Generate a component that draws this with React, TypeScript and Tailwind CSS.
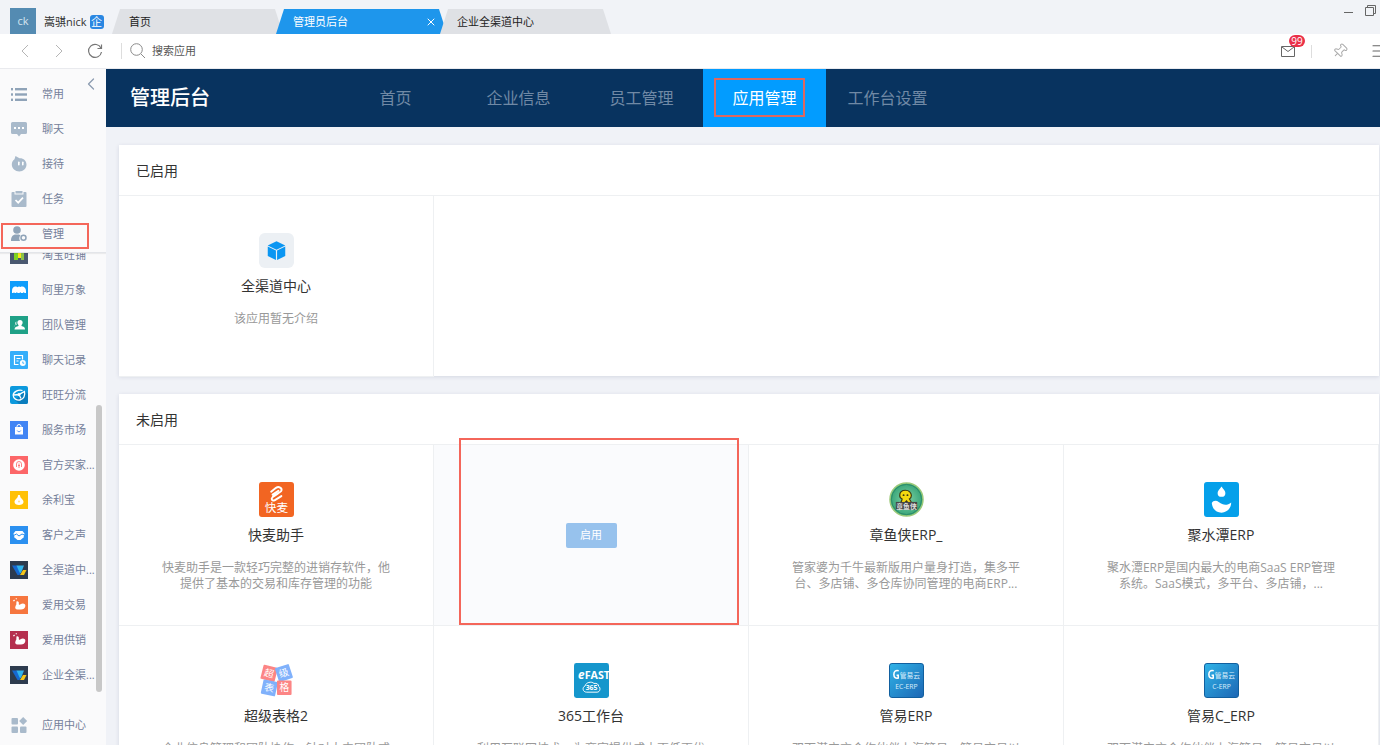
import type { ReactNode } from 'react';
import { ChevronLeft, Menu, Pin, X } from 'lucide-react';

type NavItem = { label: string; icon: ReactNode; marked?: boolean };
type AppInfo = { name: string; desc: string; icon: ReactNode };

const mainMenu: NavItem[] = [
  {
    label: '常用',
    icon: (
      <g fill="#8fa3b8">
        <rect x="1" y="3" width="2" height="2.400" />
        <rect x="5" y="3" width="12" height="2.400" />
        <rect x="1" y="8.300" width="2" height="2.400" />
        <rect x="5" y="8.300" width="12" height="2.400" />
        <rect x="1" y="13.600" width="2" height="2.400" />
        <rect x="5" y="13.600" width="12" height="2.400" />
      </g>
    ),
  },
  {
    label: '聊天',
    icon: (
      <>
        <path d="M2.500 2h13a1.500 1.500 0 0 1 1.500 1.500v9a1.500 1.500 0 0 1-1.500 1.500h-4.500l-2 2.500-2-2.500h-4.500a1.500 1.500 0 0 1-1.500-1.500v-9a1.500 1.500 0 0 1 1.500-1.500z" fill="#a9bacb" />
        <g fill="#fff">
          <rect x="4" y="7" width="2" height="2" />
          <rect x="8" y="7" width="2" height="2" />
          <rect x="12" y="7" width="2" height="2" />
        </g>
      </>
    ),
  },
  {
    label: '接待',
    icon: (
      <>
        <path d="M5.500 1l4 2.200c4-.2 7 2.600 7 6.300 0 4-3.200 7-7.200 7s-7.500-3-7.500-7c0-2 1-4 2.700-5.200z" fill="#a9bacb" />
        <rect x="8" y="6.500" width="1.600" height="4" rx=".8" fill="#fff" />
        <rect x="12" y="6.500" width="1.600" height="4" rx=".8" fill="#fff" />
      </>
    ),
  },
  {
    label: '任务',
    icon: (
      <>
        <rect x="1.500" y="2" width="15" height="15" rx="1" fill="#a9bacb" />
        <rect x="4.500" y="0" width="9" height="4.500" fill="#fafafb" />
        <rect x="5.500" y="1" width="7" height="2.500" fill="#a9bacb" />
        <path d="M5.500 10l2.700 2.700 4.800-5" fill="none" stroke="#fff" strokeWidth="1.700" />
      </>
    ),
  },
  {
    label: '管理',
    marked: true,
    icon: (
      <>
        <circle cx="7" cy="5" r="3.800" fill="#8fa3b8" />
        <path d="M1 16c0-4 1.500-6.500 5-6.500h2c1 0 2 .2 2.500.8C9 12 9 14 10 16z" fill="#8fa3b8" />
        <circle cx="13.500" cy="12.700" r="2.500" fill="none" stroke="#8fa3b8" strokeWidth="1.500" />
      </>
    ),
  },
];

const swan = (
  <path
    d="M6.500 5.500c1.500-.6 2.700.6 2.300 2.300-.2 1.200.7 1.200 1.700.4 2-1.600 5.500-.8 4.800 2-.5 2.200-2 3.300-4.300 3.300H7.500c-2 0-2.800-1.700-2-3.300.5-1 1.200-2 .8-2.600zM3 4.500l1.200-1 .8 1.200-1.200.8zM5.500 2.500l1-.5.5 1-1 .5z"
    fill="#fff"
  />
);

const channel = (
  <>
    <rect width="18" height="18" fill="#2d3b4e" />
    <path d="M2 4.500h5l4 7-1.500 2.500H7.500z" fill="#1668d0" />
    <path d="M6.500 4.500H14l-3 7.500-1.500-.5z" fill="#2fb4ee" />
    <path d="M16.500 9h-3.500l-3 5h4z" fill="#f5c518" />
  </>
);

const appMenu: NavItem[] = [
  {
    label: '淘宝旺铺',
    icon: (
      <>
        <rect width="18" height="18" fill="#4a5870" />
        <path d="M4 4h4v10h-4z" fill="#7ed321" />
        <path d="M8 4h3v8h-3z" fill="#f8e71c" />
        <path d="M11 4h3v10h-3z" fill="#8bc34a" />
      </>
    ),
  },
  {
    label: '阿里万象',
    icon: (
      <>
        <rect width="18" height="18" fill="#0f9dfb" />
        <path d="M2 10c0-2.800 1.300-4.500 3.500-4.500 1 0 1.500.3 2 .8C8.200 5.300 9.500 5 10.500 6c2.500-1.300 5.500.5 5.500 4v2h-1.500l-.7-1-.8 1h-2l-.7-1-.8 1h-2l-.5-1-1 1H4.500L4 11l-.5 1H2z" fill="#fff" />
      </>
    ),
  },
  {
    label: '团队管理',
    icon: (
      <>
        <rect width="18" height="18" fill="#1fa187" />
        <circle cx="10" cy="6.500" r="2.600" fill="#fff" />
        <path d="M4.500 13.500c0-2.500 2-2.800 4-3.500V8h3v2c2 .7 3.500 1 3.500 3.500z" fill="#fff" />
        <path d="M4 11.500c0-1.500 1-2.500 3-2.700-.7-1-.9-2-.4-3.300-1.600.3-2 2-1 3.500-1 .3-2 1-1.600 2.500z" fill="#c9e9e2" />
      </>
    ),
  },
  {
    label: '聊天记录',
    icon: (
      <>
        <rect width="18" height="18" rx="1" fill="#35aefa" />
        <path d="M8.500 13.500H4.500v-9h8v4M6.500 7.500h4M6.500 10h2" fill="none" stroke="#fff" strokeWidth="1.200" />
        <circle cx="12.800" cy="12" r="3" fill="#fff" />
        <path d="M12.800 10.500v1.700h1.400" fill="none" stroke="#35aefa" strokeWidth=".9" />
      </>
    ),
  },
  {
    label: '旺旺分流',
    icon: (
      <>
        <rect width="18" height="18" rx="2" fill="#0c99dd" />
        <path d="M15 5l3 3v8a2 2 0 0 1-2 2H9l-4-4z" fill="#0a7dbd" />
        <path d="M12.500 4.500C8.500 3 3 6 3.200 9.500c.2 3.200 3.500 5 6.800 4.500 3.600-.6 5.500-4.500 4.500-8.500L9 8.500l-5 .5M9 8.500l2 4" fill="none" stroke="#fff" strokeWidth="1.300" />
        <circle cx="9" cy="8.500" r="1.500" fill="#fff" />
      </>
    ),
  },
  {
    label: '服务市场',
    icon: (
      <>
        <rect width="18" height="18" fill="#4285f4" />
        <path d="M5 6h8v7.500H5z" fill="#fff" />
        <path d="M7 6.500V5.500a2 2 0 0 1 4 0v1" fill="none" stroke="#fff" />
        <path d="M7.200 9.500c.5 1.700 3.100 1.700 3.600 0" fill="none" stroke="#4285f4" strokeWidth=".8" />
      </>
    ),
  },
  {
    label: '官方买家...',
    icon: (
      <>
        <rect width="18" height="18" fill="#fc6668" />
        <circle cx="9" cy="9" r="5.800" fill="#fff" />
        <path d="M6.500 11V8a2.500 2.500 0 0 1 5 0v3M9 7.500v4.500M8 9.500h2" fill="none" stroke="#fc6668" strokeWidth=".8" />
      </>
    ),
  },
  {
    label: '余利宝',
    icon: (
      <>
        <rect width="18" height="18" fill="#ffc107" />
        <path d="M9 4c.8 0 1.200.5 1.200 1.300 0 1 .6 1.500 1.500 2.500 1 1 1.800 2 1.800 3.200 0 2-2 3-4.500 3s-4.500-1-4.500-3c0-1.200.8-2.200 1.800-3.200.9-1 1.500-1.500 1.500-2.500C7.800 4.500 8.200 4 9 4z" fill="#fff" />
        <circle cx="9" cy="10.500" r="1" fill="#ffe08a" />
      </>
    ),
  },
  {
    label: '客户之声',
    icon: (
      <>
        <rect width="18" height="18" fill="#2b90f0" />
        <path d="M5.500 5h7l2 2.500-1 4-3 2.500h-3l-3-2.500-1-4z" fill="#fff" />
        <path d="M3.500 9.500l3-1.500L9 10l3-2 2.500 1" fill="none" stroke="#2b90f0" />
      </>
    ),
  },
  { label: '全渠道中...', icon: channel },
  {
    label: '爱用交易',
    icon: (
      <>
        <rect width="18" height="18" fill="#f6763f" />
        {swan}
      </>
    ),
  },
  {
    label: '爱用供销',
    icon: (
      <>
        <rect width="18" height="18" fill="#b5304f" />
        {swan}
      </>
    ),
  },
  { label: '企业全渠...', icon: channel },
];

const appCenter: NavItem = {
  label: '应用中心',
  icon: (
    <g fill="#a9bacb">
      <rect x="1.500" y="2" width="6.500" height="6.500" rx="1" />
      <rect x="1.500" y="10.500" width="6.500" height="6.500" rx="1" />
      <rect x="10" y="10.500" width="6.500" height="6.500" rx="1" />
      <path d="M13.200 1l4 4-4 4-4-4z" />
    </g>
  ),
};

function GuanyiLogo({ id, sub }: { id: string; sub: string }) {
  return (
    <>
      <defs>
        <linearGradient id={id} x1="0" y1="0" x2="1" y2="1">
          <stop offset="0" stopColor="#30b4e8" />
          <stop offset="1" stopColor="#1c66b4" />
        </linearGradient>
      </defs>
      <rect x=".5" y=".5" width="35" height="35" rx="2.500" fill={`url(#${id})`} stroke="#0c5c9c" />
      <path d="M10 8C6.500 7 5 9 5 11.800c0 3 2 4.500 4.500 3.700v-3H7.800" fill="none" stroke="#fff" strokeWidth="1.600" />
      <text x="11" y="15" fontSize="7" fill="#d9eefb">管易云</text>
      <text x="18" y="27" fontSize="7" textAnchor="middle" fill="#d9eefb">{sub}</text>
    </>
  );
}

const enabledApp: AppInfo = {
  name: '全渠道中心',
  desc: '该应用暂无介绍',
  icon: (
    <>
      <rect width="36" height="36" rx="6" fill="#ecf0f4" />
      <path d="M18 8.500l9 4.300-9 4.400-9-4.400z" fill="#0a96f2" />
      <path d="M9 14l8.400 4.100v9.700L9 23.700z" fill="#0a96f2" />
      <path d="M27 14l-8.400 4.100v9.700l8.400-4.100z" fill="#0a96f2" />
    </>
  ),
};

// null is the hovered cell, which shows its button in place of the app
const disabledApps: (AppInfo | null)[] = [
  {
    name: '快麦助手',
    desc: '快麦助手是一款轻巧完整的进销存软件，他提供了基本的交易和库存管理的功能',
    icon: (
      <>
        <rect width="36" height="36" rx="3" fill="#f26522" />
        <path d="M12.500 10l5-4c3-2 6.500.2 5.500 3-.6 1.600-6 4-9 6.500-2 2-.5 4.300 2 3.300l7-4.300M14 13l6-4" fill="none" stroke="#fff" strokeWidth="2" strokeLinecap="round" />
        <text x="18" y="31" fontSize="12" textAnchor="middle" fill="#fff">快麦</text>
      </>
    ),
  },
  null,
  {
    name: '章鱼侠ERP_',
    desc: '管家婆为千牛最新版用户量身打造，集多平台、多店铺、多仓库协同管理的电商ERP...',
    icon: (
      <>
        <defs>
          <radialGradient id="octo">
            <stop offset="0" stopColor="#7fd3a3" />
            <stop offset="1" stopColor="#36a378" />
          </radialGradient>
        </defs>
        <circle cx="18" cy="18" r="17" fill="url(#octo)" stroke="#9cc978" strokeWidth="1.500" />
        <circle cx="18" cy="18" r="15.500" fill="none" stroke="#2a8a66" />
        <path d="M11 14c0-3.500 2.500-5.500 6-5.500s6 2.500 6 5.500c0 2-1 3-2 3.500 1 1.500 2 3 2.500 4.500h-3.500l-2-2.500-2.500 2.500h-3.500c.3-2 1.500-3 1.500-4.500-1.500-.5-2.500-1.500-2.500-3.500z" fill="#f5d90f" stroke="#3b3613" strokeWidth="1.200" />
        <circle cx="15" cy="13.500" r="1" fill="#3b3613" />
        <circle cx="19" cy="13.500" r="1" fill="#3b3613" />
        <rect x="7" y="20.500" width="22" height="8" fill="#474747" />
        <text x="18" y="27.500" fontSize="7" fontWeight="700" textAnchor="middle" fill="#ddd">章鱼侠</text>
      </>
    ),
  },
  {
    name: '聚水潭ERP',
    desc: '聚水潭ERP是国内最大的电商SaaS ERP管理系统。SaaS模式，多平台、多店铺，...',
    icon: (
      <>
        <rect width="36" height="36" rx="3" fill="#05a0ea" />
        <path d="M18 4.500c2 3 4 4.600 4 6.700a4 4 0 0 1-8 0c0-2.100 2-3.700 4-6.700z" fill="#fff" />
        <path d="M8 21.500c1.500-2.500 4.500-3 7.500-.7 4 3.200 8.500 3.500 12.500.2 0 6-4.500 10.500-10 10.500s-9.500-4-10-10z" fill="#fff" />
      </>
    ),
  },
  {
    name: '超级表格2',
    desc: '企业信息管理和团队协作，针对大中团队或企业，提供在线表格与数据管理的服务',
    icon: (
      <g fontSize="10" textAnchor="middle">
        <g transform="rotate(14 10 10)">
          <rect x="3" y="3" width="15" height="15" rx="1" fill="#fc8585" />
          <text x="10.500" y="14" fill="#fff">超</text>
        </g>
        <g transform="rotate(-18 25 10)">
          <rect x="18" y="3" width="15" height="15" rx="1" fill="#80b1fb" />
          <text x="25.500" y="14" fill="#fff">级</text>
        </g>
        <g transform="rotate(12 10 26)">
          <rect x="3" y="18" width="15" height="15" rx="1" fill="#80b1fb" />
          <text x="10.500" y="29" fill="#fff">表</text>
        </g>
        <rect x="18.500" y="18" width="15" height="15" rx="1" fill="#fc8585" />
        <text x="26" y="29" fill="#fff">格</text>
      </g>
    ),
  },
  {
    name: '365工作台',
    desc: '利用互联网技术，为商家提供成本更低更优质的服务，帮助商家提升管理效率',
    icon: (
      <>
        <rect width="36" height="36" rx="2.500" fill="#1596cc" />
        <text x="4" y="16" fontSize="12" fontStyle="italic" fontWeight="700" fill="#fff">e</text>
        <text x="11" y="16" fontSize="11" fontWeight="700" fill="#fff" fontFamily="'Liberation Sans Narrow', 'Open Sans', sans-serif">FAST</text>
        <path d="M13 30c-4 0-5-5-1.500-6.500C12 20 18 18.500 20.500 21c3-.5 5 1 4.800 3 2.500 1.500 1.500 6-1.500 6z" fill="none" stroke="#fff" />
        <text x="18" y="28" fontSize="7" fontWeight="700" textAnchor="middle" fill="#fff">365</text>
      </>
    ),
  },
  {
    name: '管易ERP',
    desc: '双面潜立方合作伙伴上海管易，管易交易以电商企业为核心，提供全渠道管理服务',
    icon: <GuanyiLogo id="gyEc" sub="EC-ERP" />,
  },
  {
    name: '管易C_ERP',
    desc: '双面潜立方合作伙伴上海管易，管易交易以电商企业为核心，提供全渠道管理服务',
    icon: <GuanyiLogo id="gyC" sub="C-ERP" />,
  },
];

const sections = ['首页', '企业信息', '员工管理', '应用管理', '工作台设置'];
const tabs = ['首页', '管理员后台', '企业全渠道中心'];

function TitleBar() {
  return (
    <header className="flex h-[34px] shrink-0 items-end bg-[#f1f3f7] pl-[10px]">
      <div className="flex h-[26px] w-[26px] items-center justify-center bg-[#548bb2] text-[11px] text-[#d5e5f0]">ck</div>
      <div className="flex h-6 w-[76px] items-center gap-[3px] pl-2 text-[11px] whitespace-nowrap text-[#333]">
        嵩骐nick
        <span className="flex h-[14px] w-[14px] shrink-0 items-center justify-center rounded-[3px] bg-[#2a87e2] text-[11px] text-white">企</span>
      </div>
      <nav className="flex">
        {tabs.map((tab, i) => {
          const active = i === 1;
          return (
            <div
              key={tab}
              className={`-mr-[7px] flex h-[25px] w-[171px] items-center justify-between pt-px pr-[10px] pl-[17px] text-[11px] [clip-path:polygon(8px_0,calc(100%_-_8px)_0,100%_100%,0_100%)] ${
                active ? 'relative bg-[#1e96ec] text-white' : 'bg-[#dfe1e5] text-[#222]'
              }`}
            >
              <button type="button">{tab}</button>
              {active && (
                <button type="button" aria-label="关闭">
                  <X size={12} strokeWidth={2} />
                </button>
              )}
            </div>
          );
        })}
      </nav>
      <div className="ml-auto flex items-start gap-[10px] self-start pt-1 pr-1 text-[#666]">
        <button type="button" aria-label="最小化">
          <svg width="12" height="12" viewBox="0 0 12 12" stroke="currentColor">
            <path d="M2 8.500h9" />
          </svg>
        </button>
        <button type="button" aria-label="还原">
          <svg width="12" height="12" viewBox="0 0 12 12" fill="none" stroke="currentColor">
            <path d="M1.500 3.500h8v8h-8zM3.500 3V1.500h8v8H10" />
          </svg>
        </button>
      </div>
    </header>
  );
}

function Toolbar() {
  return (
    <div className="flex h-[35px] shrink-0 items-center overflow-hidden border-b border-[#e9eaee] bg-white">
      <div className="flex items-center gap-[18px] pl-[17px] text-[#b5b5b5]">
        <button type="button" aria-label="后退">
          <svg width="16" height="16" viewBox="0 0 16 16" fill="none" stroke="currentColor">
            <path d="M11 2L5 8l6 6" />
          </svg>
        </button>
        <button type="button" aria-label="前进">
          <svg width="16" height="16" viewBox="0 0 16 16" fill="none" stroke="currentColor">
            <path d="M5 2l6 6-6 6" />
          </svg>
        </button>
        <button type="button" aria-label="刷新" className="ml-[2px] text-[#777]">
          <svg width="16" height="16" viewBox="0 0 16 16" fill="none" stroke="currentColor" strokeWidth="1.200">
            <path d="M14 5.200A6.500 6.500 0 1 0 14.500 9M14.500 1.500v4h-4" />
          </svg>
        </button>
      </div>
      <label className="ml-[18px] flex flex-1 items-center border-l border-[#ddd] pl-2 text-[#8a8a8a]">
        <svg width="16" height="16" viewBox="0 0 16 16" fill="none" stroke="currentColor">
          <circle cx="6.500" cy="6.500" r="5.800" />
          <path d="M11 11l4 4" />
        </svg>
        <input
          type="text"
          aria-label="搜索应用"
          placeholder="搜索应用"
          className="ml-[6px] h-4 w-[120px] bg-transparent text-[11px] outline-none placeholder:text-[#555]"
        />
      </label>
      <div className="flex items-center">
        <button type="button" aria-label="消息" className="relative text-[#666]">
          <svg width="16" height="14" viewBox="0 0 16 14" fill="none" stroke="currentColor">
            <path d="M1.500 2.500h13v10h-13zM2 3l6 4.500L14 3" />
          </svg>
          <span className="absolute -top-[9px] left-[9px] flex h-3 w-4 items-center justify-center rounded-full bg-[#ea3048] text-[10px] leading-3 text-white">
            99
          </span>
        </button>
        <span className="ml-[15px] h-[13px] w-px bg-[#ddd]" />
        <button type="button" aria-label="固定" className="ml-5 rotate-45 text-[#aaa]">
          <Pin size={16} strokeWidth={1.5} />
        </button>
        <button type="button" aria-label="菜单" className="-mr-2 ml-[22px] text-[#666]">
          <Menu size={18} strokeWidth={1.5} />
        </button>
      </div>
    </div>
  );
}

function SideLink({ item }: { item: NavItem }) {
  return (
    <a href="#" className="relative flex h-[35px] items-center gap-[14px] pl-[10px] text-[11px] whitespace-nowrap text-[#74809a]">
      <svg width="18" height="18" viewBox="0 0 18 18" className="-mt-px mb-px shrink-0">
        {item.icon}
      </svg>
      {item.label}
      {item.marked && <span className="absolute top-[6px] left-px h-[26px] w-[88px] border-2 border-[#f4665a]" />}
    </a>
  );
}

function Sidebar() {
  return (
    <aside className="relative flex w-[106px] shrink-0 flex-col overflow-hidden bg-[#fafafb]">
      <button type="button" aria-label="收起" className="absolute top-[5px] left-[81px] z-20 text-[#8b9bb0]">
        <ChevronLeft size={20} strokeWidth={1.5} />
      </button>
      <nav className="z-10 border-b border-[#e3e5e9] pt-2 shadow-[0_1px_1px_rgba(0,0,0,0.06)]">
        {mainMenu.map((item) => (
          <SideLink key={item.label} item={item} />
        ))}
      </nav>
      <div className="relative min-h-0 flex-1 overflow-hidden">
        <nav className="-mt-[15px]">
          {appMenu.map((item) => (
            <SideLink key={item.label} item={item} />
          ))}
        </nav>
        <span className="absolute right-1 bottom-4 h-[63%] w-[6px] rounded-full bg-[#c8c8c8]" />
      </div>
      <div className="pb-[2px]">
        <SideLink item={appCenter} />
      </div>
    </aside>
  );
}

function AppCard({ app }: { app: AppInfo }) {
  return (
    <div className="flex h-[181px] flex-col items-center border-r border-b border-[#eef0f2] pt-[37px] text-center">
      <svg width="35" height="35" viewBox="0 0 36 36">
        {app.icon}
      </svg>
      <h3 className="mt-2 text-[14px] leading-5 text-[#333]">{app.name}</h3>
      <p className="mt-[15px] line-clamp-2 w-[238px] text-[12px] leading-4 text-[#999]">{app.desc}</p>
    </div>
  );
}

function Panel({ title, children }: { title: string; children: ReactNode }) {
  return (
    <section className="bg-white shadow-[0_1px_4px_rgba(40,60,100,0.14)]">
      <h2 className="flex h-[51px] items-center border-b border-[#eef0f2] pl-[17px] text-[14px] text-[#333]">{title}</h2>
      <div className="-mb-px grid grid-cols-4">{children}</div>
    </section>
  );
}

export default function App() {
  return (
    <div
      lang="zh-CN"
      className="flex h-screen flex-col overflow-hidden bg-[#f0f2f7] font-['Open_Sans','Noto_Sans_CJK_SC',sans-serif]"
    >
      <TitleBar />
      <Toolbar />
      <div className="flex min-h-0 flex-1">
        <Sidebar />
        <main className="min-w-0 flex-1 overflow-hidden">
          <div className="flex h-[58px] items-center bg-[#08335f]">
            <h1 className="w-[228px] pl-6 text-[20px] font-medium text-white">管理后台</h1>
            <nav className="flex h-full">
              {sections.map((name) => {
                const active = name === '应用管理';
                return (
                  <a
                    key={name}
                    href="#"
                    className={`relative flex w-[123px] items-center justify-center text-[16px] ${
                      active ? 'bg-[#029cff] text-white' : 'text-[#7089a5]'
                    }`}
                  >
                    {name}
                    {active && <span className="absolute top-[9px] left-[11px] h-[39px] w-[91px] border-2 border-[#e0675f]" />}
                  </a>
                );
              })}
            </nav>
          </div>
          <div className="flex flex-col gap-[18px] pt-[18px] pr-px pl-[13px]">
            <Panel title="已启用">
              <AppCard app={enabledApp} />
            </Panel>
            <Panel title="未启用">
              {disabledApps.map((app) =>
                app ? (
                  <AppCard key={app.name} app={app} />
                ) : (
                  <div key="hover" className="relative flex h-[181px] items-center justify-center border-r border-b border-[#eef0f2] bg-[#fafbfd]">
                    <button type="button" className="h-[25px] w-[51px] rounded-[2px] bg-[#97c2ed] text-[11px] text-white">
                      启用
                    </button>
                    <span className="absolute -top-[7px] right-[9px] bottom-0 left-[25px] border-2 border-[#f4665a]" />
                  </div>
                ),
              )}
            </Panel>
          </div>
        </main>
      </div>
    </div>
  );
}
